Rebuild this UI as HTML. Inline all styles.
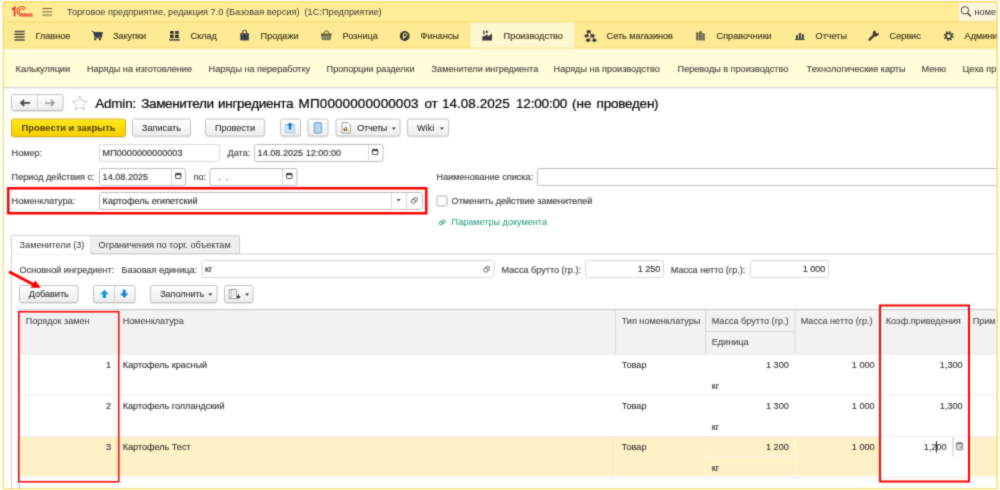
<!DOCTYPE html>
<html lang="ru">
<head>
<meta charset="utf-8">
<title>1C</title>
<style>
*{box-sizing:border-box;margin:0;padding:0}
html,body{width:1000px;height:490px;overflow:hidden;background:#fff}
body{font-family:"Liberation Sans",sans-serif;font-size:9.1px;color:#3f3f3f;position:relative}
.abs,.t,.btn,.inp,.ln{position:absolute}
.t{white-space:pre;line-height:12px;height:12px;margin-left:.6px}
#clip{position:absolute;left:2.3px;top:.8px;width:995.9px;height:488.6px;overflow:hidden;background:#fff}
#inner{position:absolute;left:-2.3px;top:-.8px;width:1000px;height:490px}
#fb{position:absolute;left:0;top:0;width:995.9px;height:488.6px;border:1.5px solid #f9dc6c}
#scaler{position:absolute;left:0;top:0;width:2000px;height:980px;transform:scale(.5);transform-origin:0 0}
#wrap{position:absolute;left:0;top:0;width:1000px;height:490px;overflow:hidden;background:#fff;filter:url(#soft)}
#app{position:absolute;left:0;top:0;width:1000px;height:490px;zoom:2}
#titlebar{left:0;top:0;width:1000px;height:23px;background:#feec98}
#titleline{left:0;top:21.7px;width:1000px;height:1px;background:#f2d46c}
#secbar{left:0;top:22.7px;width:1000px;height:26.3px;background:#fdea94}
#secactive{left:470.3px;top:22.7px;width:104px;height:26px;background:#fef8cf}
#subbar{left:0;top:48.5px;width:1000px;height:39px;background:#fffdda}
#subline{left:0;top:87.2px;width:1000px;height:1.2px;background:linear-gradient(#cdcdcd,#e4e4e4)}
#search{left:959px;top:2px;width:40px;height:19.5px;background:#fdf5dc}
.sec{color:#4a4222;-webkit-text-stroke:.2px #4a4222}
.sub{color:#4c4940;-webkit-text-stroke:.15px #4c4940}
.btn{border:1px solid #c2c2c2;border-radius:2.5px;background:linear-gradient(#ffffff,#ececec);box-shadow:0 1px 0 rgba(0,0,0,.10);height:18px;line-height:16px;text-align:center;color:#333;-webkit-text-stroke:.12px #333;white-space:pre}
.btn.y{background:linear-gradient(#ffe61c,#f9d000);border-color:#d9b100;font-weight:bold;color:#54430a;-webkit-text-stroke:0;font-size:9.38px}
.inp{border:1px solid #bdbdbd;border-radius:2.5px;background:#fff;height:18px;line-height:16px;padding-left:2.6px;color:#2c2c2c;-webkit-text-stroke:.12px #2c2c2c;white-space:pre}
.inp.r{text-align:right;padding-right:2.6px}
.lbl{color:#444;-webkit-text-stroke:.15px #444}
.red{position:absolute;border:2px solid #ff0000}
.ln{background:#d9d9d9}
.tt{top:94px;font-size:13.54px;line-height:18px;height:18px;color:#000;margin-left:-.4px;-webkit-text-stroke:.2px #000}
.hd{color:#505050;-webkit-text-stroke:.12px #505050}
.cell{color:#333;-webkit-text-stroke:.12px #333}
</style>
</head>
<body>
<svg width="0" height="0" style="position:absolute"><filter id="soft" x="0" y="0" width="100%" height="100%" color-interpolation-filters="sRGB"><feConvolveMatrix order="3" kernelMatrix="1 2 1 2 12 2 1 2 1" divisor="24" edgeMode="duplicate" preserveAlpha="true"/></filter></svg>
<div id="wrap"><div id="scaler"><div id="app"><div id="clip"><div id="inner">

<!-- title bar -->
<div class="abs" id="titlebar"></div>
<div class="abs" id="search"></div>
<div class="abs" style="left:601px;top:.9px;width:34px;height:1.2px;background:#d3d6a6"></div>
<div class="abs" id="titleline"></div>
<div class="abs" id="secbar"></div>
<div class="abs" id="secactive"></div>
<div class="abs" id="subbar"></div>
<div class="abs" style="left:0;top:47.7px;width:1000px;height:1px;background:#f7dd82"></div>
<div class="abs" style="left:470.3px;top:47.7px;width:104px;height:1px;background:#fdf3c0"></div>
<div class="abs" id="subline"></div>

<div class="t" style="left:66.4px;top:5.6px;color:#3b3b3b;font-size:9.2px">Торговое предприятие, редакция 7.0 (Базовая версия)  (1С:Предприятие)</div>
<div class="t" style="left:974px;top:6px;color:#333">номе</div>

<!-- sections -->
<div class="t sec" style="left:35px;top:30px">Главное</div>
<div class="t sec" style="left:112.4px;top:30px">Закупки</div>
<div class="t sec" style="left:190px;top:30px">Склад</div>
<div class="t sec" style="left:260px;top:30px">Продажи</div>
<div class="t sec" style="left:342px;top:30px">Розница</div>
<div class="t sec" style="left:420px;top:30px">Финансы</div>
<div class="t sec" style="left:503px;top:30px">Производство</div>
<div class="t sec" style="left:606px;top:30px">Сеть магазинов</div>
<div class="t sec" style="left:716px;top:30px">Справочники</div>
<div class="t sec" style="left:815px;top:30px">Отчеты</div>
<div class="t sec" style="left:889px;top:30px">Сервис</div>
<div class="t sec" style="left:964px;top:30px">Админи</div>

<!-- sub menu -->
<div class="t sub" style="left:15px;top:62.5px">Калькуляции</div>
<div class="t sub" style="left:86.4px;top:62.5px">Наряды на изготовление</div>
<div class="t sub" style="left:208px;top:62.5px">Наряды на переработку</div>
<div class="t sub" style="left:326px;top:62.5px">Пропорции разделки</div>
<div class="t sub" style="left:431px;top:62.5px">Заменители ингредиента</div>
<div class="t sub" style="left:553px;top:62.5px">Наряды на производство</div>
<div class="t sub" style="left:677px;top:62.5px">Переводы в производство</div>
<div class="t sub" style="left:806px;top:62.5px">Технологические карты</div>
<div class="t sub" style="left:921px;top:62.5px">Меню</div>
<div class="t sub" style="left:962px;top:62.5px">Цеха пр</div>

<!-- form title -->
<div class="btn" style="left:11.2px;top:94.2px;width:52.4px;height:17px"></div>
<div class="ln" style="left:37.2px;top:95.2px;width:1px;height:15px;background:#d4d4d4"></div>
<div class="t tt" style="left:95.6px;letter-spacing:-0.22px">Admin:</div>
<div class="t tt" style="left:141.6px;letter-spacing:-0.37px">Заменители</div>
<div class="t tt" style="left:218.4px;letter-spacing:-0.32px">ингредиента</div>
<div class="t tt" style="left:299px;letter-spacing:0.08px">МП0000000000003</div>
<div class="t tt" style="left:425px;letter-spacing:-0.4px">от</div>
<div class="t tt" style="left:442.4px;letter-spacing:0px">14.08.2025</div>
<div class="t tt" style="left:516.4px;letter-spacing:-0.19px">12:00:00</div>
<div class="t tt" style="left:572.4px;letter-spacing:0px">(не</div>
<div class="t tt" style="left:597px;letter-spacing:-0.26px">проведен)</div>

<!-- command bar -->
<div class="btn y" style="left:11.2px;top:118.3px;width:114.6px;height:18.5px;line-height:16.5px">Провести и закрыть</div>
<div class="btn" style="left:132px;top:118.6px;width:59px">Записать</div>
<div class="btn" style="left:205.2px;top:118.6px;width:59.6px">Провести</div>
<div class="btn" style="left:279.8px;top:118.6px;width:21px"></div>
<div class="btn" style="left:307.5px;top:118.6px;width:21px"></div>
<div class="btn" style="left:335.4px;top:118.6px;width:65px;text-align:left;padding-left:20.8px;letter-spacing:-.25px">Отчеты</div>
<div class="btn" style="left:407px;top:118.6px;width:42px;text-align:left;padding-left:9px">Wiki</div>

<!-- row: number/date -->
<div class="t lbl" style="left:11px;top:147px">Номер:</div>
<div class="inp" style="left:99px;top:143.8px;width:121px;border-color:#d8d8d8">МП0000000000003</div>
<div class="t lbl" style="left:227px;top:147px">Дата:</div>
<div class="inp" style="left:254px;top:143.8px;width:129.4px">14.08.2025 12:00:00</div>
<div class="ln" style="left:368px;top:145px;width:1px;height:15.5px"></div>

<!-- row: period -->
<div class="t lbl" style="left:11px;top:171px">Период действия с:</div>
<div class="inp" style="left:99px;top:167.8px;width:87px">14.08.2025</div>
<div class="ln" style="left:171px;top:169px;width:1px;height:15.5px"></div>
<div class="t lbl" style="left:193px;top:171px">по:</div>
<div class="inp" style="left:209.5px;top:167.8px;width:88px">  .  .</div>
<div class="ln" style="left:282px;top:169px;width:1px;height:15.5px"></div>
<div class="t lbl" style="left:436px;top:171px">Наименование списка:</div>
<div class="inp" style="left:537px;top:167.8px;width:470px"></div>

<!-- row: nomenclature -->
<div class="t lbl" style="left:11px;top:195px">Номенклатура:</div>
<div class="inp" style="left:99px;top:191.8px;width:324px">Картофель египетский</div>
<div class="ln" style="left:391px;top:193px;width:1px;height:15.5px"></div>
<div class="ln" style="left:406px;top:193px;width:1px;height:15.5px"></div>
<div class="red" style="left:7.2px;top:186.9px;width:420.3px;height:27.4px;border-width:2.5px"></div>
<div class="abs" style="left:436.5px;top:195.7px;width:10.8px;height:10.8px;border:1px solid #b0b0b0;border-radius:2px;background:#fff"></div>
<div class="t lbl" style="left:451px;top:195px">Отменить действие заменителей</div>
<div class="t" style="left:451px;top:216px;color:#1a9a78">Параметры документа</div>

<!-- tabs -->
<div class="ln" style="left:11px;top:253.6px;width:990px;height:1px;background:#d2d2d2"></div>
<div class="ln" style="left:11px;top:253.6px;width:1px;height:240px;background:#d2d2d2"></div>
<div class="abs" style="left:91px;top:234.8px;width:149px;height:19.3px;border:1px solid #cfcfcf;border-left:none;background:#efefef;border-radius:0 2px 0 0"></div>
<div class="abs" style="left:11px;top:234.8px;width:80.5px;height:19.8px;border:1px solid #cfcfcf;border-bottom:none;background:#fff;border-radius:2px 2px 0 0"></div>
<div class="t" style="left:19px;top:239px;color:#333">Заменители (3)</div>
<div class="t" style="left:98px;top:239px;color:#333">Ограничения по торг. объектам</div>

<!-- main ingredient row -->
<div class="t lbl" style="left:19px;top:264px">Основной ингредиент:</div>
<div class="t lbl" style="left:121px;top:264px">Базовая единица:</div>
<div class="inp" style="left:201.5px;top:260.2px;width:293px;border-color:#d8d8d8">кг</div>
<div class="t lbl" style="left:501px;top:264px">Масса брутто (гр.):</div>
<div class="inp r" style="left:585px;top:260.2px;width:79px;border-color:#d8d8d8">1 250</div>
<div class="t lbl" style="left:670.2px;top:264px">Масса нетто (гр.):</div>
<div class="inp r" style="left:750px;top:260.2px;width:79px;border-color:#d8d8d8">1 000</div>

<!-- table toolbar -->
<div class="btn" style="left:19px;top:284.8px;width:59.5px">Добавить</div>
<div class="btn" style="left:92.9px;top:284.8px;width:42.8px"></div>
<div class="ln" style="left:114px;top:286px;width:1px;height:15.5px;background:#d0d0d0"></div>
<div class="btn" style="left:150px;top:284.8px;width:67.5px;text-align:left;padding-left:9.2px;letter-spacing:-.08px">Заполнить</div>
<div class="btn" style="left:223.8px;top:284.8px;width:29.6px"></div>

<!-- table -->
<div class="abs" style="left:19px;top:309px;width:981px;height:44.5px;background:#f2f2f2;border-top:1px solid #c6c6c6"></div>
<div class="ln" style="left:19px;top:309px;width:1px;height:182px;background:#c9c9c9"></div>
<!-- header dividers -->
<div class="ln" style="left:118.5px;top:310px;width:1px;height:43.5px;background:#dadada"></div>
<div class="ln" style="left:615px;top:310px;width:1px;height:43.5px;background:#dadada"></div>
<div class="ln" style="left:705px;top:310px;width:1px;height:43.5px;background:#dadada"></div>
<div class="ln" style="left:794.5px;top:310px;width:1px;height:43.5px;background:#dadada"></div>
<div class="ln" style="left:880px;top:310px;width:1px;height:43.5px;background:#dadada"></div>
<div class="ln" style="left:969px;top:310px;width:1px;height:43.5px;background:#dadada"></div>
<div class="ln" style="left:705px;top:331px;width:90px;height:1px;background:#dcdcdc"></div>
<div class="t hd" style="left:25.1px;top:314.5px">Порядок замен</div>
<div class="t hd" style="left:122.1px;top:314.5px">Номенклатура</div>
<div class="t hd" style="left:621.1px;top:314.5px">Тип номенклатуры</div>
<div class="t hd" style="left:711.1px;top:314.5px">Масса брутто (гр.)</div>
<div class="t hd" style="left:800.1px;top:314.5px">Масса нетто (гр.)</div>
<div class="t hd" style="left:885.1px;top:314.5px">Коэф.приведения</div>
<div class="t hd" style="left:972.1px;top:314.5px">Прим</div>
<div class="t hd" style="left:711.1px;top:336px">Единица</div>
<!-- rows -->
<div class="ln" style="left:20px;top:353.5px;width:980px;height:1px;background:#e3e3e3"></div>
<div class="ln" style="left:20px;top:394.4px;width:980px;height:1px;background:#ededed"></div>
<div class="ln" style="left:20px;top:435.8px;width:980px;height:1px;background:#ededed"></div>
<div class="abs" id="selrow" style="left:20px;top:437.2px;width:980px;height:38.6px;background:#fef1c7"></div>
<div class="ln" style="left:20px;top:476.8px;width:980px;height:1px;background:#e9ebe6"></div>
<div class="ln" style="left:118.5px;top:437.2px;width:1px;height:38.6px;background:#fff8e0"></div>
<div class="ln" style="left:615px;top:437.2px;width:1px;height:38.6px;background:#fff8e0"></div>
<div class="ln" style="left:705px;top:437.2px;width:1px;height:38.6px;background:#fff8e0"></div>
<div class="ln" style="left:794.5px;top:437.2px;width:1px;height:38.6px;background:#fff8e0"></div>
<div class="ln" style="left:705px;top:456.2px;width:90px;height:1px;background:#fff8e0"></div>
<div class="abs" style="left:880px;top:436.8px;width:89px;height:39.6px;background:#fff"></div>
<div class="ln" style="left:952.5px;top:437.5px;width:1px;height:19px;background:#c4c4c4"></div>

<div class="t cell" style="left:20px;top:358.5px;width:90.5px;text-align:right">1</div>
<div class="t cell" style="left:122.1px;top:358.5px">Картофель красный</div>
<div class="t cell" style="left:621.1px;top:358.5px">Товар</div>
<div class="t cell" style="left:706px;top:358.5px;width:82.2px;text-align:right">1 300</div>
<div class="t cell" style="left:796px;top:358.5px;width:78px;text-align:right">1 000</div>
<div class="t cell" style="left:881px;top:358.5px;width:81px;text-align:right">1,300</div>
<div class="t cell" style="left:711.1px;top:379.5px">кг</div>

<div class="t cell" style="left:20px;top:399.5px;width:90.5px;text-align:right">2</div>
<div class="t cell" style="left:122.1px;top:399.5px">Картофель голландский</div>
<div class="t cell" style="left:621.1px;top:399.5px">Товар</div>
<div class="t cell" style="left:706px;top:399.5px;width:82.2px;text-align:right">1 300</div>
<div class="t cell" style="left:796px;top:399.5px;width:78px;text-align:right">1 000</div>
<div class="t cell" style="left:881px;top:399.5px;width:81px;text-align:right">1,300</div>
<div class="t cell" style="left:711.1px;top:420.3px">кг</div>

<div class="t cell" style="left:20px;top:440.6px;width:90.5px;text-align:right">3</div>
<div class="t cell" style="left:122.1px;top:440.6px">Картофель Тест</div>
<div class="t cell" style="left:621.1px;top:440.6px">Товар</div>
<div class="t cell" style="left:706px;top:440.6px;width:82.2px;text-align:right">1 200</div>
<div class="t cell" style="left:796px;top:440.6px;width:78px;text-align:right">1 000</div>
<div class="t cell" style="left:881px;top:440.6px;width:65px;text-align:right">1,200</div>
<div class="ln" style="left:936px;top:441px;width:1px;height:11.4px;background:#223"></div>
<div class="t cell" style="left:711.1px;top:461.5px">кг</div>

<!-- red annotations -->
<div class="red" style="left:18.2px;top:311px;width:101.4px;height:171.6px;border-width:1.5px"></div>
<div class="red" style="left:878.9px;top:304.6px;width:91.3px;height:178px;border-width:2px"></div>

<!-- icons overlay -->
<svg class="abs" style="left:0;top:0" width="1000" height="490" viewBox="0 0 1000 490">
<!-- 1C logo -->
<g fill="none" stroke="#e5432b" stroke-linecap="butt">
<path d="M12 9.8 L14.6 7.6 L14.6 16.2" stroke-width="2"/>
<path d="M25.6 8.6 A4.7 4.7 0 1 0 21.6 15.9 L32.6 15.9" stroke-width="1.2"/>
<path d="M24.2 10.2 A2.7 2.7 0 1 0 21.6 14.1 L32.6 14.1" stroke-width="1.1"/>
</g>
<!-- title hamburger -->
<g stroke="#6e6238" stroke-width="1"><path d="M42.5 8.5H52.2M42.5 11.8H52.2M42.5 15.1H52.2"/></g>
<!-- search magnifier -->
<circle cx="964.9" cy="10.3" r="3.7" fill="none" stroke="#4a453a" stroke-width="1"/><path d="M967.6 13.1 L970.9 16.2" stroke="#4a453a" stroke-width="1.5"/>
<!-- section: main hamburger -->
<g fill="#4a4740"><rect x="14.6" y="30.8" width="10" height="1.5"/><rect x="14.6" y="33.6" width="10" height="1.5"/><rect x="14.6" y="36.4" width="10" height="1.5"/><rect x="14.6" y="39.2" width="10" height="1.5"/></g>
<!-- cart -->
<g fill="#3b3d48"><path d="M91.6 30.5 L93.4 31.2 L93.9 32 L102.9 32 L101.8 37.2 L94.6 37.2 L93 31.9 L91.4 31.2 Z"/><rect x="94.4" y="37.4" width="7.2" height="0.9"/><rect x="94.2" y="38" width="2" height="2.2"/><rect x="99" y="38" width="2" height="2.2"/></g>
<!-- warehouse -->
<g fill="#33352f"><rect x="170.1" y="31" width="3.7" height="2.8"/><rect x="175" y="31" width="3.8" height="2.8"/><rect x="170.1" y="34.6" width="3.7" height="3.5"/><rect x="175" y="34.6" width="3.8" height="3.5"/><rect x="169.2" y="39" width="10.5" height="1.7" fill="#5e553c"/></g>
<!-- bag -->
<g><path d="M242.6 34 V32.6 A2 2.4 0 0 1 246.6 32.6 V34" fill="none" stroke="#5d5532" stroke-width="1.1"/><rect x="240.3" y="33.1" width="8.5" height="7.3" fill="#3d3f4c"/><path d="M242.6 33.2V34.6M246.6 33.2V34.6" stroke="#9a9588" stroke-width="0.7"/></g>
<!-- basket -->
<g><path d="M323.2 33.8 L325.4 30.9 H327.4 L329.6 33.8" fill="none" stroke="#5a5030" stroke-width="1"/><path d="M321.6 35 H331 L330.2 39.6 H322.4 Z" fill="#8f8a72" stroke="#4f4728" stroke-width="0.7"/><rect x="321" y="33.6" width="10.7" height="1.3" fill="#4f4728"/></g>
<!-- ruble -->
<circle cx="404.7" cy="36" r="4.9" fill="#3a3936"/><path d="M403.6 39 V33.2 H405.6 A1.5 1.5 0 0 1 405.6 36.2 H402.8 M402.8 37.6 H405.4" fill="none" stroke="#f8e28c" stroke-width="1"/>
<!-- factory -->
<path fill="#3b3b3b" d="M482.3 40.6 V36.2 L485 36 L487.5 34 L488 36.4 L492 33.4 V40.6 Z M483.2 30.8 H484.6 V34.4 H483.2 Z M485.9 30.8 H487.8 V33 H485.9 Z"/>
<!-- network -->
<g fill="#3d3440" stroke="#3d3440" stroke-width="0.8"><path d="M588.7 31.7 L586.6 35.9 M588.7 31.7 L592.5 35.7 L588.1 40.3 M592.5 35.7 L594.4 40.3" fill="none"/><ellipse cx="588.7" cy="31.7" rx="1.9" ry="1.2"/><ellipse cx="586.6" cy="35.9" rx="1.9" ry="1.2"/><ellipse cx="592.5" cy="35.7" rx="1.9" ry="1.2"/><ellipse cx="588.1" cy="40.3" rx="1.9" ry="1.2"/><ellipse cx="594.4" cy="40.3" rx="1.9" ry="1.2"/></g>
<!-- books -->
<g fill="#6f6a52"><rect x="696" y="32.4" width="2.6" height="8"/><rect x="699" y="31.3" width="2.8" height="9.1"/><path d="M702.2 32.8 L704.8 33.4 L704.8 40.4 L702.2 40.4 Z"/></g>
<!-- chart -->
<g fill="#3c3c3c"><rect x="796" y="35.2" width="2" height="4"/><rect x="798.9" y="32.9" width="2" height="6.3"/><rect x="801.8" y="34.2" width="2" height="5"/><rect x="795" y="39" width="9.6" height="1"/></g>
<!-- wrench -->
<g><path d="M869.6 39.6 L875 34.2" stroke="#3e3a34" stroke-width="2.4" stroke-linecap="round" fill="none"/><path d="M878.6 32.6 A3 3 0 1 1 875.6 30.4 L875.9 33 L877.6 33.4 Z" fill="#3e3a34"/></g>
<!-- gear -->
<g fill="none" stroke="#3c3a34"><circle cx="948.7" cy="36" r="2.7" stroke-width="1.4"/><circle cx="948.7" cy="36" r="4.1" stroke-width="1.6" stroke-dasharray="1.6 1.62"/></g>

<!-- red arrow -->
<path d="M9 271.7 L34 284.8" stroke="#ff0000" stroke-width="2.8" fill="none"/><path d="M40.6 287.8 L35.3 280.4 L30.6 287.7 Z" fill="#ff0000"/>
<!-- nav arrows -->
<path d="M30 102.9 H21.5 M24.2 99.9 L21 102.9 L24.2 105.9" fill="none" stroke="#444" stroke-width="1.7"/>
<path d="M45 102.9 H53.5 M50.8 99.9 L54 102.9 L50.8 105.9" fill="none" stroke="#9a9a9a" stroke-width="1.5"/>
<!-- star -->
<path d="M79.8 95.9 L81.8 100.9 L87.4 101.3 L83.1 104.9 L84.5 110 L79.8 107.1 L75.1 110 L76.5 104.9 L72.2 101.3 L77.8 100.9 Z" fill="#fff" stroke="#c4c4c4" stroke-width="0.9"/>

<!-- toolbar icons -->
<g><rect x="285.2" y="124.5" width="9.6" height="8.5" fill="#cfe3f3" stroke="#9fbfdb" stroke-width="0.6"/><path d="M290 122.2 L293 125.6 H291.2 V129.6 H288.8 V125.6 H287 Z" fill="#1b75c9"/></g>
<g><rect x="314.2" y="122.6" width="7.4" height="10.4" rx="1" fill="#9cc6ea" stroke="#4d8fcb" stroke-width="0.7"/><path d="M315.4 125H320.4M315.4 127.2H320.4M315.4 129.4H320.4M315.4 131.4H320.4" stroke="#e9f3fb" stroke-width="0.8"/></g>
<g><path d="M342 122.6 H348 L350.4 125 V133 H342 Z" fill="#fff" stroke="#8d8d8d" stroke-width="0.8"/><rect x="343.6" y="128.2" width="1.4" height="3" fill="#d33"/><rect x="345.4" y="126.6" width="1.4" height="4.6" fill="#3a9a3a"/><rect x="347.2" y="129" width="1.4" height="2.2" fill="#e8a33a"/></g>
<path d="M391.6 127.4 H396 L393.8 129.8 Z M439.8 127.4 H444.2 L442 129.8 Z" fill="#444"/>

<!-- calendar icons -->
<defs><g id="cal"><rect x="0.4" y="1" width="5.4" height="4.9" rx="0.7" fill="#fff" stroke="#3a3a3a" stroke-width="0.9"/><rect x="0.2" y="0.8" width="5.8" height="1.7" fill="#3a3a3a"/><path d="M1.7 0.2V1.4M4.5 0.2V1.4" stroke="#3a3a3a" stroke-width="0.9"/></g></defs>
<use href="#cal" x="372" y="148.6"/><use href="#cal" x="175.2" y="172.6"/><use href="#cal" x="286.2" y="172.6"/>
<!-- dropdown + open icons (nomenclature) -->
<path d="M396.6 199 H400.6 L398.6 201.2 Z" fill="#444"/>
<defs><g id="opn" fill="#fff" stroke="#555" stroke-width="0.8"><rect x="2.2" y="0.4" width="3.6" height="3.6" rx="0.5"/><rect x="0.4" y="2.2" width="3.6" height="3.6" rx="0.5"/></g></defs>
<use href="#opn" x="411.2" y="197.3"/>
<use href="#opn" x="483.6" y="266.2"/>
<!-- link icon -->
<g fill="none" stroke="#1a9a78" stroke-width="0.9"><rect x="441.6" y="220.2" width="3.6" height="2.8" rx="1"/><rect x="439.2" y="221.8" width="3.6" height="2.8" rx="1"/></g>
<!-- up / down arrows -->
<path d="M104.4 289.8 L108.6 294.2 H106 V298 H102.8 V294.2 H100.2 Z" fill="#0f9bd7"/>
<path d="M124.2 298 L128.4 293.6 H125.8 V289.8 H122.6 V293.6 H120 Z" fill="#1b86d6"/>
<!-- fill dropdown arrow, list icon -->
<path d="M208.2 293.6 H212.4 L210.3 295.9 Z M245 293.6 H249.2 L247.1 295.9 Z" fill="#444"/>
<g><rect x="229.2" y="289.6" width="7.4" height="9" fill="#fff" stroke="#8a8a8a" stroke-width="0.8"/><path d="M231.2 289.8V298.4" stroke="#b9a58c" stroke-width="0.9"/><path d="M232.4 291.6H235.4M232.4 293.6H235.4M232.4 295.6H235.4" stroke="#bbb" stroke-width="0.7"/><path d="M238.4 294 V298 M236.8 296.6 L238.4 298.6 L240 296.6 Z" stroke="#333" stroke-width="0.9" fill="#333"/></g>
<!-- calculator -->
<g><rect x="956.4" y="442.6" width="6.2" height="7.2" rx="1" fill="#d9d9d9" stroke="#777" stroke-width="0.9"/><rect x="956.4" y="442.6" width="6.2" height="1.8" fill="#8a8a8a"/><rect x="959.8" y="446.6" width="1.6" height="1.2" fill="#777"/></g>
</svg>
</div><div id="fb"></div></div></div></div></div>
</body>
</html>
